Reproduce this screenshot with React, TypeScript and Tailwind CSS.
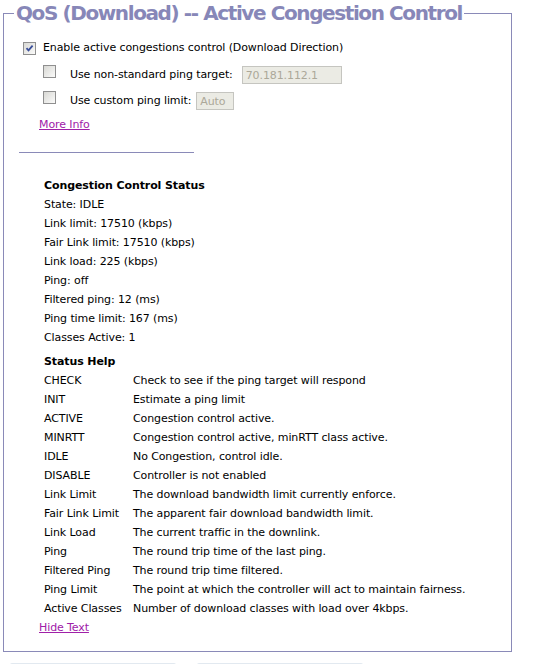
import React from 'react';

const helpRows: [string, string][] = [
  ['CHECK', 'Check to see if the ping target will respond'],
  ['INIT', 'Estimate a ping limit'],
  ['ACTIVE', 'Congestion control active.'],
  ['MINRTT', 'Congestion control active, minRTT class active.'],
  ['IDLE', 'No Congestion, control idle.'],
  ['DISABLE', 'Controller is not enabled'],
  ['Link Limit', 'The download bandwidth limit currently enforce.'],
  ['Fair Link Limit', 'The apparent fair download bandwidth limit.'],
  ['Link Load', 'The current traffic in the downlink.'],
  ['Ping', 'The round trip time of the last ping.'],
  ['Filtered Ping', 'The round trip time filtered.'],
  ['Ping Limit', 'The point at which the controller will act to maintain fairness.'],
  ['Active Classes', 'Number of download classes with load over 4kbps.'],
];

const statusLines = [
  'State: IDLE',
  'Link limit: 17510 (kbps)',
  'Fair Link limit: 17510 (kbps)',
  'Link load: 225 (kbps)',
  'Ping: off',
  'Filtered ping: 12 (ms)',
  'Ping time limit: 167 (ms)',
  'Classes Active: 1',
];

function Checkbox({ checked }: { checked?: boolean }) {
  return (
    <span className="relative inline-block h-[13px] w-[13px] shrink-0 border border-[#8f8f8f] bg-gradient-to-br from-[#d8d8d4] to-[#fbfbfa]">
      {checked && (
        <svg viewBox="0 0 11 11" className="absolute inset-0 h-[11px] w-[11px]">
          <path d="M2.5 5.2 L4.5 7.4 L8.6 2.6" fill="none" stroke="#3a4f9a" strokeWidth="1.8" />
        </svg>
      )}
    </span>
  );
}

export default function App() {
  return (
    <div className="bg-white pl-[3px] font-['DejaVu_Sans',sans-serif] text-[11px] tracking-[-0.1px] text-black">
      <fieldset className="w-[509px] border border-[#8a8ab8] px-0 pb-[14px]">
        <legend className="ml-[10px] px-[2px] text-[20px] font-bold leading-[26px] tracking-[-1.4px] text-[#8787b8]">
          QoS (Download) -- Active Congestion Control
        </legend>

        <div className="ml-[19px] mt-[13px] flex h-[19px] items-center gap-[7px]">
          <Checkbox checked />
          <span>Enable active congestions control (Download Direction)</span>
        </div>

        <div className="ml-[39px] mt-[7px] flex h-[20px] items-center">
          <span className="mb-[2px]">
            <Checkbox />
          </span>
          <span className="ml-[14px]">Use non-standard ping target:</span>
          <input
            disabled
            value="70.181.112.1"
            readOnly
            className="ml-[9px] h-[18px] w-[100px] border border-[#c5c5c0] bg-[#ebebe4] px-[3px] font-['DejaVu_Sans',sans-serif] text-[11px] text-[#aca899]"
          />
        </div>

        <div className="ml-[39px] mt-[6px] flex h-[20px] items-center">
          <span className="mb-[2px]">
            <Checkbox />
          </span>
          <span className="ml-[14px]">Use custom ping limit:</span>
          <input
            disabled
            value="Auto"
            readOnly
            className="ml-[5px] h-[18px] w-[38px] border border-[#c5c5c0] bg-[#ebebe4] px-[3px] font-['DejaVu_Sans',sans-serif] text-[11px] text-[#aca899]"
          />
        </div>

        <div className="ml-[35px] mt-[4px] leading-[19px]">
          <a href="#" className="text-[#a020a8] underline">
            More Info
          </a>
        </div>

        <div className="ml-[15px] mt-[18px] h-px w-[175px] bg-[#8a8ab8]" />

        <div className="ml-[40px] mt-[23px] leading-[19px]">
          <div className="font-bold">Congestion Control Status</div>
          {statusLines.map((line) => (
            <div key={line}>{line}</div>
          ))}

          <div className="mt-[5px] font-bold">Status Help</div>
          {helpRows.map(([name, desc]) => (
            <div key={name} className="flex">
              <span className="w-[89px] shrink-0">{name}</span>
              <span>{desc}</span>
            </div>
          ))}
        </div>

        <div className="ml-[35px] leading-[19px]">
          <a href="#" className="text-[#a020a8] underline">
            Hide Text
          </a>
        </div>
      </fieldset>

      <div className="mt-[11px] flex gap-[21px] pl-[7px]">
        <div className="h-[20px] w-[166px] rounded-t-[2px] border-t-2 border-[#e2e9f0] bg-[#f3f6f9]" />
        <div className="h-[20px] w-[166px] rounded-t-[2px] border-t-2 border-[#e2e9f0] bg-[#f3f6f9]" />
      </div>
    </div>
  );
}
